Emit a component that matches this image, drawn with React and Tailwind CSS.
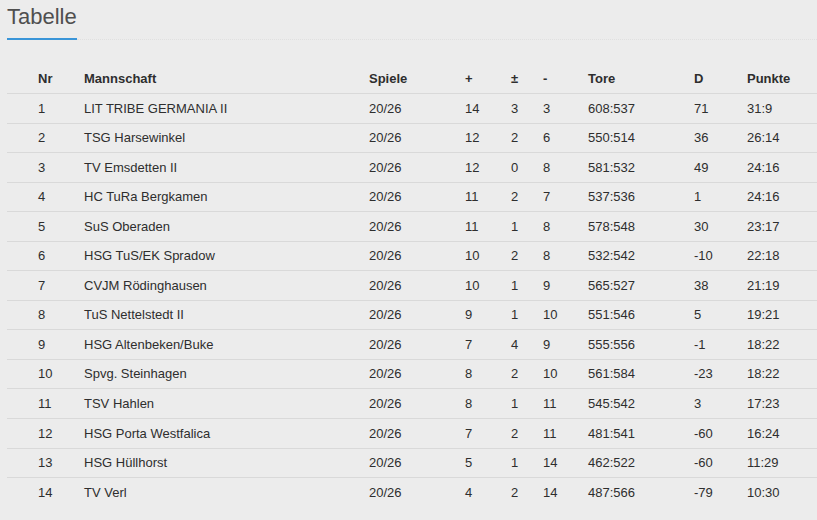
import React from "react";

const rows = [
  [1, "LIT TRIBE GERMANIA II", "20/26", 14, 3, 3, "608:537", 71, "31:9"],
  [2, "TSG Harsewinkel", "20/26", 12, 2, 6, "550:514", 36, "26:14"],
  [3, "TV Emsdetten II", "20/26", 12, 0, 8, "581:532", 49, "24:16"],
  [4, "HC TuRa Bergkamen", "20/26", 11, 2, 7, "537:536", 1, "24:16"],
  [5, "SuS Oberaden", "20/26", 11, 1, 8, "578:548", 30, "23:17"],
  [6, "HSG TuS/EK Spradow", "20/26", 10, 2, 8, "532:542", -10, "22:18"],
  [7, "CVJM Rödinghausen", "20/26", 10, 1, 9, "565:527", 38, "21:19"],
  [8, "TuS Nettelstedt II", "20/26", 9, 1, 10, "551:546", 5, "19:21"],
  [9, "HSG Altenbeken/Buke", "20/26", 7, 4, 9, "555:556", -1, "18:22"],
  [10, "Spvg. Steinhagen", "20/26", 8, 2, 10, "561:584", -23, "18:22"],
  [11, "TSV Hahlen", "20/26", 8, 1, 11, "545:542", 3, "17:23"],
  [12, "HSG Porta Westfalica", "20/26", 7, 2, 11, "481:541", -60, "16:24"],
  [13, "HSG Hüllhorst", "20/26", 5, 1, 14, "462:522", -60, "11:29"],
  [14, "TV Verl", "20/26", 4, 2, 14, "487:566", -79, "10:30"],
];

const cols = "grid grid-cols-[31px_46px_285px_96px_46px_32px_45px_106px_53px_1fr]";

export default function App() {
  return (
    <div className="min-h-[520px] w-[817px] bg-[#ececec] pl-[7px] text-[13px] text-[#2e2e2e] [font-family:'Liberation_Sans',Arial,sans-serif]">
      <div className="flex items-end">
        <h1 className="border-b-2 border-[#3a95d8] pb-[8px] pt-[4px] text-[22px] leading-[26px] text-[#4f4f4f]">
          Tabelle
        </h1>
        <div className="flex-1 border-b border-dotted border-[#e0e0e0]" />
      </div>
      <div className="mt-[23px]">
        <div className={`${cols} h-[30px] items-center pt-[2px] font-bold`}>
          <div />
          <div>Nr</div>
          <div>Mannschaft</div>
          <div>Spiele</div>
          <div>+</div>
          <div>±</div>
          <div>-</div>
          <div>Tore</div>
          <div>D</div>
          <div>Punkte</div>
        </div>
        {rows.map((r) => (
          <div
            key={r[0]}
            className={`${cols} h-[29.55px] items-center border-t border-[#d9d9d9]`}
          >
            <div />
            {r.map((c, i) => (
              <div key={i} className="whitespace-nowrap">
                {c}
              </div>
            ))}
          </div>
        ))}
      </div>
    </div>
  );
}
